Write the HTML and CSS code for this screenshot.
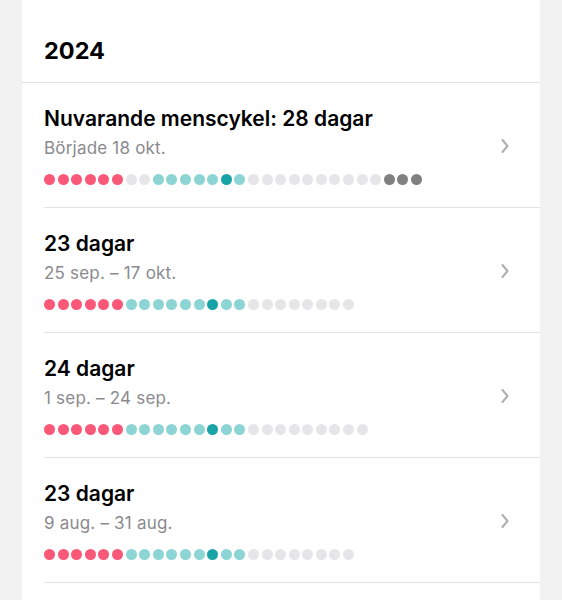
FILE: index.html
```html
<!DOCTYPE html>
<html lang="sv">
<head>
  <meta charset="UTF-8">
  <title>Menscykler</title>
  <link rel="stylesheet" href="styles.css">
</head>
<body>
  <div class="card">
    <div class="year">2024</div>

    <div class="cycle">
      <div class="info">
        <div class="title">Nuvarande menscykel: 28 dagar</div>
        <div class="range">Började 18 okt.</div>
        <div class="dots" data-days="ppppppggtttttdtggggggggggkkk"></div>
      </div>
      <svg class="chevron" width="8" height="14" viewBox="0 0 8 14"><path d="M1.5 1 L6.5 7 L1.5 13"/></svg>
    </div>

    <div class="cycle">
      <div class="info">
        <div class="title">23 dagar</div>
        <div class="range">25 sep. – 17 okt.</div>
        <div class="dots" data-days="ppppppttttttdttgggggggg"></div>
      </div>
      <svg class="chevron" width="8" height="14" viewBox="0 0 8 14"><path d="M1.5 1 L6.5 7 L1.5 13"/></svg>
    </div>

    <div class="cycle">
      <div class="info">
        <div class="title">24 dagar</div>
        <div class="range">1 sep. – 24 sep.</div>
        <div class="dots" data-days="ppppppttttttdttggggggggg"></div>
      </div>
      <svg class="chevron" width="8" height="14" viewBox="0 0 8 14"><path d="M1.5 1 L6.5 7 L1.5 13"/></svg>
    </div>

    <div class="cycle">
      <div class="info">
        <div class="title">23 dagar</div>
        <div class="range">9 aug. – 31 aug.</div>
        <div class="dots" data-days="ppppppttttttdttgggggggg"></div>
      </div>
      <svg class="chevron" width="8" height="14" viewBox="0 0 8 14"><path d="M1.5 1 L6.5 7 L1.5 13"/></svg>
    </div>
  </div>

  <script>
    var kinds = { p: 'period', g: 'empty', t: 'fertile', d: 'ovulation', k: 'future' };

    var rows = document.querySelectorAll('.dots');
    for (var i = 0; i < rows.length; i++) {
      var days = rows[i].getAttribute('data-days');
      for (var j = 0; j < days.length; j++) {
        var dot = document.createElement('span');
        dot.className = 'dot ' + kinds[days[j]];
        rows[i].appendChild(dot);
      }
    }
  </script>
</body>
</html>
```

FILE: styles.css
```css
body {
  margin: 0;
  background: #f2f2f2;
  font-family: Inter, "Noto Sans", sans-serif;
  color: #000;
}

.card {
  margin-left: 22px;
  width: 518px;
  background: #fff;
  padding-bottom: 40px;
}

.year {
  padding: 37px 22px 17px;
  font-size: 23.5px;
  line-height: 28px;
  font-weight: 700;
  border-bottom: 1px solid #e3e3e6;
}

.cycle {
  margin-left: 22px;
  padding: 23px 31px 22px 0;
  display: flex;
  align-items: center;
  border-bottom: 1px solid #e3e3e6;
}

.info {
  flex: 1;
}

.title {
  font-size: 21px;
  line-height: 26px;
  font-weight: 600;
}

.range {
  margin-top: 5px;
  font-size: 17px;
  line-height: 22px;
  letter-spacing: 0.2px;
  color: #8a8a8e;
}

.dots {
  margin-top: 15px;
  display: flex;
  gap: 2.6px;
}

.dot {
  width: 11px;
  height: 11px;
  border-radius: 50%;
  background: #e6e6e9;
}

.dot.period {
  background: #fa5878;
}

.dot.fertile {
  background: #8dd4d4;
}

.dot.ovulation {
  background: #18a4a6;
}

.dot.future {
  background: #808080;
}

.chevron {
  fill: none;
  stroke: #aeaeb2;
  stroke-width: 2;
  stroke-linecap: round;
  stroke-linejoin: round;
}
```
